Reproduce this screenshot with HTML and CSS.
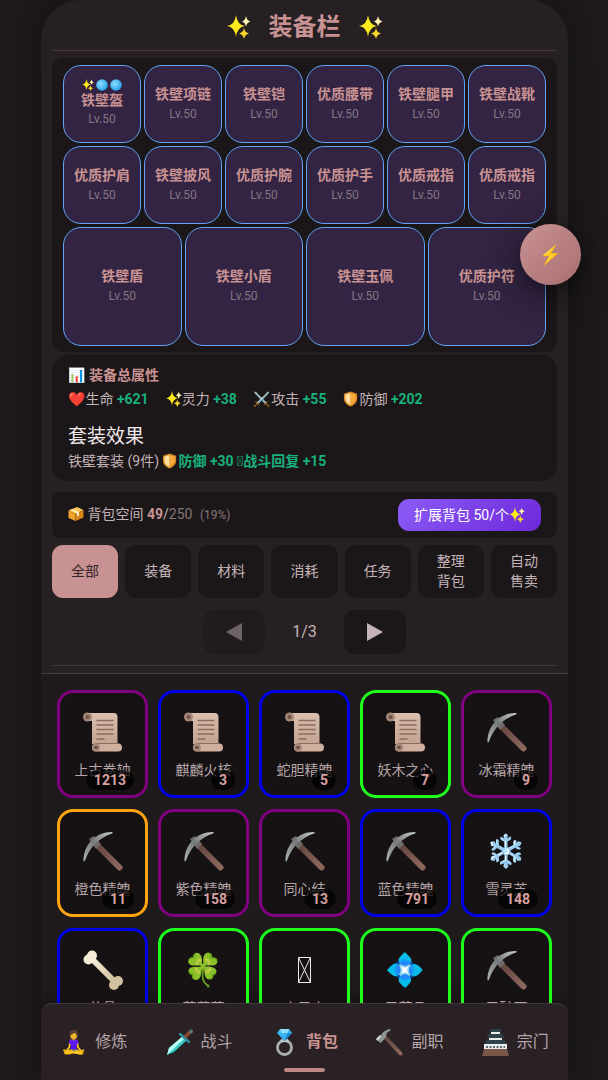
FILE: index.html
```html
<!DOCTYPE html>
<html lang="zh-CN">

<head>
    <meta charset="UTF-8">
    <meta name="viewport" content="width=device-width, initial-scale=1.0">
    <title>装备栏</title>
    <link rel="stylesheet" href="styles.css">
</head>

<body>
    <!-- 图标 -->
    <svg class="defs" aria-hidden="true">
        <defs>
            <linearGradient id="g-paper" x1="0" y1="0" x2="0" y2="1">
                <stop offset="0" stop-color="#d9bfae"/>
                <stop offset="1" stop-color="#c3a391"/>
            </linearGradient>
            <linearGradient id="g-steel" x1="0" y1="1" x2="1" y2="0">
                <stop offset="0" stop-color="#aeb8bb"/>
                <stop offset=".5" stop-color="#76797a"/>
                <stop offset="1" stop-color="#c8cdcd"/>
            </linearGradient>
            <linearGradient id="g-wood" x1="0" y1="0" x2="1" y2="1">
                <stop offset="0" stop-color="#5f433c"/>
                <stop offset="1" stop-color="#8d675c"/>
            </linearGradient>
            <radialGradient id="g-gem" cx=".4" cy=".4" r=".6">
                <stop offset="0" stop-color="#8fdcff"/>
                <stop offset="1" stop-color="#29a4ea"/>
            </radialGradient>
            <linearGradient id="g-bone" x1="0" y1="0" x2="1" y2="1">
                <stop offset="0" stop-color="#f8f1dd"/>
                <stop offset="1" stop-color="#cdbd9d"/>
            </linearGradient>
        </defs>
        <symbol id="spark" viewBox="0 0 24 24">
            <path fill="#fde91c" d="M9 0q1.200 10 9 11-7.800 1-9 11-1.200-10-9-11Q7.800 10 9 0z"/>
            <path fill="#fff3b0" d="M19 1q.8 4.500 4.500 5.500-3.700 1-4.500 5-.8-4-4-5Q18.200 5.500 19 1z"/>
            <path fill="#f6d52a" d="M17 13q.8 4.500 5 5.500-4.200 1-5 5.500-.8-4.500-5-5.500 4.200-1 5-5.500z"/>
        </symbol>
        <symbol id="gem" viewBox="0 0 12 12">
            <circle cx="6" cy="6" r="5.800" fill="url(#g-gem)"/>
        </symbol>
        <symbol id="shield" viewBox="0 0 17 17">
            <path fill="#d98a20" d="M8 .5 15 3v5c0 4-3 7-7 8.500C4 15 1 12 1 8V3z"/>
            <path fill="#ffe0a0" d="M8 2v13c-3-1.400-5.500-4-5.500-7V4z"/>
            <path fill="#f7a93b" d="M8 2l5.500 2v4c0 3-2.500 5.600-5.500 7z"/>
        </symbol>
        <symbol id="pack" viewBox="0 0 16 16">
            <path fill="#ffc65a" d="M.5 4.500 9 1l6.500 3-8 4z"/>
            <path fill="#f0a02c" d="M.5 4.500l7 3.500v7l-7-3z"/>
            <path fill="#d98418" d="M15.500 4v7.500l-8 3.500V8z"/>
            <path fill="#fff0c8" d="M4 3l7 3.200v3.300l-2 .9V7.200L2.500 3.800z"/>
        </symbol>
        <symbol id="scroll" viewBox="0 0 40 40">
            <path fill="url(#g-paper)" d="M4 1h27c2 0 3.500 1.500 3.500 4v27H9V9H4z"/>
            <circle cx="4.500" cy="5" r="4.500" fill="#a68878"/>
            <circle cx="4.500" cy="5" r="2" fill="#6d5046"/>
            <path stroke="#8b6c5f" stroke-width="1.500" d="M13.500 8.500h17M13.500 13h17M13.500 17.500h17M13.500 22h17M13.500 27h8"/>
            <rect x="9" y="31.500" width="30" height="8" rx="4" fill="#cfb09e"/>
            <path stroke="#8b6c5f" stroke-width="1" d="M12 31.500h24"/>
            <circle cx="13" cy="35.500" r="4" fill="#a68878"/>
            <circle cx="13" cy="35.500" r="1.800" fill="#6d5046"/>
        </symbol>
        <symbol id="pick" viewBox="0 0 40 40">
            <path stroke="url(#g-wood)" stroke-width="6" stroke-linecap="round" d="M12 12l24.500 24.500"/>
            <path fill="#6f6b6c" d="M6 8l5-3 7 8-5 5z"/>
            <path fill="url(#g-steel)" d="M.5 30C.5 14 12 1 29 1c.8.200.8 1.200 0 1.600C16 7 7 16 2 29.500c-.3.900-1.300 1.200-1.500.5z"/>
        </symbol>
        <symbol id="bone" viewBox="0 0 40 40">
            <path stroke="url(#g-bone)" stroke-width="6" d="M8 8l24 24"/>
            <g fill="#f5ecd6">
                <circle cx="9" cy="5.500" r="5"/>
                <circle cx="5.500" cy="9.500" r="5"/>
            </g>
            <g fill="#d2c2a2">
                <circle cx="35" cy="31" r="5"/>
                <circle cx="31" cy="35" r="5"/>
            </g>
        </symbol>
        <symbol id="dagger" viewBox="0 0 27 27">
            <path fill="#35c9c4" d="M1 26l2-7L17 7l4 4L8 23z"/>
            <path fill="#b9fff4" d="M1 26l2-7L17 7l2 2z"/>
            <path stroke="#2f8fa0" stroke-width="2.500" stroke-linecap="round" d="M14 5l9 8"/>
            <path stroke="#8a4b2b" stroke-width="3.500" d="M19 8l5-5"/>
            <circle cx="25" cy="2.500" r="2" fill="#58727c"/>
        </symbol>
        <symbol id="ring" viewBox="0 0 27 27">
            <circle cx="13.500" cy="18.500" r="7" fill="none" stroke="#a9aeb1" stroke-width="2.800"/>
            <path fill="#3bb4f2" d="M9 0h9l3 4-7.500 8L6 4z"/>
            <path fill="#8fe0ff" d="M9 0h9l-1.500 4h-6z"/>
            <path fill="#1688cf" d="M16.500 4H21l-7.500 8z"/>
            <path fill="#c2c7ca" d="M10 9.500l3.500 3 3.500-3 .5 3.500h-8z"/>
        </symbol>
        <symbol id="hammer" viewBox="0 0 27 27">
            <path stroke="url(#g-wood)" stroke-width="4" stroke-linecap="round" d="M9 8l15.500 16.500"/>
            <path fill="#8f9596" d="M0 10l4-4 1 1c1-4 5-6.500 9.500-7L14 2c-3 .8-4 2-3.500 5L8 10.500 4.500 14z"/>
            <path fill="#c9cfcf" d="M0 10l4-4 1.500 1.500L1.500 12z"/>
        </symbol>
        <symbol id="castle" viewBox="0 0 27 27">
            <path fill="#7b5749" d="M2 20h23l2 7H0z"/>
            <path fill="#e8ecec" d="M9 2h9v5H9zM7 8h13v6H7zM2 15h23v5H2z"/>
            <path fill="#2e4248" d="M9 0h9l1.500 3h-12zM7 5h13l2.500 4h-18zM5 11h17l3 4H2z"/>
            <path stroke="#2e4248" stroke-width="1.500" stroke-dasharray="2 1.500" d="M4 18h19"/>
        </symbol>
    </svg>

    <div class="app">
        <header class="top">
            <h1 class="title"><svg class="star"><use href="#spark"/></svg>装备栏<svg class="star"><use href="#spark"/></svg></h1>

            <!-- 装备 -->
            <div class="equip">
                <div class="row six">
                    <button class="slot"><span class="gems"><svg><use href="#spark"/></svg><svg><use href="#gem"/></svg><svg><use href="#gem"/></svg></span><b>铁壁盔</b><small>Lv.50</small></button>
                    <button class="slot"><b>铁壁项链</b><small>Lv.50</small></button>
                    <button class="slot"><b>铁壁铠</b><small>Lv.50</small></button>
                    <button class="slot"><b>优质腰带</b><small>Lv.50</small></button>
                    <button class="slot"><b>铁壁腿甲</b><small>Lv.50</small></button>
                    <button class="slot"><b>铁壁战靴</b><small>Lv.50</small></button>
                    <button class="slot"><b>优质护肩</b><small>Lv.50</small></button>
                    <button class="slot"><b>铁壁披风</b><small>Lv.50</small></button>
                    <button class="slot"><b>优质护腕</b><small>Lv.50</small></button>
                    <button class="slot"><b>优质护手</b><small>Lv.50</small></button>
                    <button class="slot"><b>优质戒指</b><small>Lv.50</small></button>
                    <button class="slot"><b>优质戒指</b><small>Lv.50</small></button>
                </div>
                <div class="row four">
                    <button class="slot"><b>铁壁盾</b><small>Lv.50</small></button>
                    <button class="slot"><b>铁壁小盾</b><small>Lv.50</small></button>
                    <button class="slot"><b>铁壁玉佩</b><small>Lv.50</small></button>
                    <button class="slot"><b>优质护符</b><small>Lv.50</small></button>
                </div>
            </div>

            <!-- 属性 -->
            <div class="stats">
                <h2 class="stats-title">📊 装备总属性</h2>
                <div class="stats-list">
                    <span>❤️生命 <b>+621</b></span>
                    <span><svg class="mini"><use href="#spark"/></svg>灵力 <b>+38</b></span>
                    <span>⚔️攻击 <b>+55</b></span>
                    <span><svg class="mini"><use href="#shield"/></svg>防御 <b>+202</b></span>
                </div>
                <h3 class="suit-title">套装效果</h3>
                <p class="suit">铁壁套装 (9件) <b><svg class="mini"><use href="#shield"/></svg>防御 +30</b> <b><svg class="box-mini" viewBox="0 0 6 10"><path d="M.5.5h5v9h-5zM.5.5l5 9M5.5.5l-5 9"/></svg>战斗回复 +15</b></p>
            </div>

            <!-- 背包空间 -->
            <div class="space">
                <span><svg class="mini"><use href="#pack"/></svg> 背包空间 <b>49</b>/<i>250</i> <small>(19%)</small></span>
                <button class="expand">扩展背包 50/个<svg class="mini"><use href="#spark"/></svg></button>
            </div>

            <div class="tabs">
                <button class="tab active">全部</button>
                <button class="tab">装备</button>
                <button class="tab">材料</button>
                <button class="tab">消耗</button>
                <button class="tab">任务</button>
                <button class="tab">整理<br>背包</button>
                <button class="tab">自动<br>售卖</button>
            </div>

            <div class="pager">
                <button class="page-btn" aria-label="上一页" disabled><svg viewBox="0 0 16 18"><path d="M16 0v18L0 9z"/></svg></button>
                <span>1/3</span>
                <button class="page-btn" aria-label="下一页"><svg viewBox="0 0 16 18"><path d="M0 0v18l16-9z"/></svg></button>
            </div>
        </header>

        <!-- 物品 -->
        <main class="bag">
            <button class="item purple"><span class="pic"><svg><use href="#scroll"/></svg></span><span>上古卷轴</span><em>1213</em></button>
            <button class="item blue"><span class="pic"><svg><use href="#scroll"/></svg></span><span>麒麟火核</span><em>3</em></button>
            <button class="item blue"><span class="pic"><svg><use href="#scroll"/></svg></span><span>蛇胆精魄</span><em>5</em></button>
            <button class="item green"><span class="pic"><svg><use href="#scroll"/></svg></span><span>妖木之心</span><em>7</em></button>
            <button class="item purple"><span class="pic"><svg><use href="#pick"/></svg></span><span>冰霜精魄</span><em>9</em></button>
            <button class="item orange"><span class="pic"><svg><use href="#pick"/></svg></span><span>橙色精魄</span><em>11</em></button>
            <button class="item purple"><span class="pic"><svg><use href="#pick"/></svg></span><span>紫色精魄</span><em>158</em></button>
            <button class="item purple"><span class="pic"><svg><use href="#pick"/></svg></span><span>同心结</span><em>13</em></button>
            <button class="item blue"><span class="pic"><svg><use href="#pick"/></svg></span><span>蓝色精魄</span><em>791</em></button>
            <button class="item blue"><span class="pic">❄️</span><span>雪灵芝</span><em>148</em></button>
            <button class="item blue"><span class="pic"><svg><use href="#bone"/></svg></span><span>兽骨</span></button>
            <button class="item green"><span class="pic">🍀</span><span>草药草</span></button>
            <button class="item green"><span class="pic"><svg class="box-big" viewBox="0 0 13 26"><path d="M.5.5h12v25H.5zM.5.5l12 25M12.5.5l-12 25"/></svg></span><span>木灵木</span></button>
            <button class="item green"><span class="pic">💠</span><span>灵蓝晶</span></button>
            <button class="item green"><span class="pic"><svg><use href="#pick"/></svg></span><span>灵矿石</span></button>
        </main>

        <nav class="nav">
            <a href="#"><span class="ico">🧘‍♀️</span>修炼</a>
            <a href="#"><svg class="ico"><use href="#dagger"/></svg>战斗</a>
            <a href="#" class="on"><svg class="ico"><use href="#ring"/></svg>背包</a>
            <a href="#"><svg class="ico"><use href="#hammer"/></svg>副职</a>
            <a href="#"><svg class="ico"><use href="#castle"/></svg>宗门</a>
        </nav>
    </div>
    <button class="float" aria-label="快捷">⚡</button>
</body>

</html>
```
FILE: styles.css
```css
* {
    box-sizing: border-box;
    margin: 0;
    padding: 0;
}

body {
    padding: 0 40px 0 41px;
    background: #1e1a1b;
    color: #c3b3b7;
    font-family: Roboto, "Noto Sans CJK SC", "Noto Color Emoji", sans-serif;
    font-size: 14px;
    line-height: 20px;
    overflow: hidden;
}

button {
    border: 0;
    background: none;
    color: inherit;
    font: inherit;
    cursor: pointer;
}

svg {
    fill: currentColor;
}

.defs {
    position: absolute;
    width: 0;
    height: 0;
}

.mini {
    width: 16px;
    height: 16px;
    vertical-align: -3px;
}

.app {
    display: flex;
    flex-direction: column;
    height: 100vh;
    border-radius: 40px 40px 0 0;
    background: #1f1b1c;
    box-shadow: 0 0 40px rgba(0, 0, 0, .4);
    overflow: hidden;
}

.top {
    padding: 0 11px 7px;
    background: #272022;
    border-bottom: 1px solid #493a3c;
}

.title {
    display: flex;
    justify-content: center;
    gap: 18px;
    height: 51px;
    padding-top: 11px;
    border-bottom: 1px solid #4b3638;
    color: #c99292;
    font-size: 24px;
    line-height: 32px;
}

.star {
    width: 24px;
    height: 26px;
    margin-top: 3px;
}

/* 装备栏 */
.equip {
    margin-top: 7px;
    padding: 7px 11px 6px;
    border-radius: 11px;
    background: #1b1617;
}

.row {
    display: grid;
    gap: 3px;
}

.six {
    grid-template-columns: repeat(6, 1fr);
    margin-bottom: 3px;
}

.four {
    grid-template-columns: repeat(4, 1fr);
}

.slot {
    display: flex;
    flex-direction: column;
    align-items: center;
    justify-content: center;
    aspect-ratio: 1;
    border: 1px solid #60a5fa;
    border-radius: 18px;
    background: #322442;
    color: #c99292;
    white-space: nowrap;
}

.slot small {
    color: #857684;
    font-size: 12px;
}

.gems {
    display: flex;
    gap: 2px;
}

.gems svg {
    width: 12px;
    height: 12px;
}

.gems + b {
    line-height: 18px;
}

/* 总属性 */
.stats {
    margin-top: 3px;
    padding: 10px 16px;
    border-radius: 16px;
    background: #1b1617;
}

.stats b {
    color: #18b07b;
}

.stats-title {
    color: #c99292;
    font-size: 14px;
}

.stats-list {
    display: flex;
    gap: 17px;
    margin: 4px 0 14px;
}

.suit-title {
    color: #f0e8ea;
    font-size: 19px;
    font-weight: 400;
    line-height: 28px;
}

.box-mini {
    width: 6px;
    height: 10px;
    fill: none;
    stroke: #18b07b;
    stroke-width: .5;
}

.space {
    display: flex;
    align-items: center;
    justify-content: space-between;
    margin: 11px 0 7px;
    padding: 7px 16px;
    border-radius: 8px;
    background: #1b1617;
}

.space b {
    color: #c99292;
}

.space i,
.space small {
    color: #857679;
    font-style: normal;
}

.space small {
    margin-left: 4px;
    font-size: 12px;
}

.expand {
    padding: 6px 16px;
    border-radius: 11px;
    background: linear-gradient(135deg, #8b5cf6, #6d28d9);
    color: #fff;
}

.tabs {
    display: grid;
    grid-template-columns: repeat(7, 1fr);
    gap: 7px;
}

.tab {
    height: 53px;
    border-radius: 11px;
    background: #1b1617;
}

.tab.active {
    background: #c99292;
    color: #32262a;
}

.pager {
    display: flex;
    align-items: center;
    justify-content: center;
    gap: 27px;
    padding: 12px 0 11px;
    border-bottom: 1px solid #43373a;
    font-size: 16px;
}

.page-btn {
    width: 62px;
    height: 44px;
    border-radius: 11px;
    background: #1b1617;
}

.page-btn svg {
    display: block;
    width: 16px;
    height: 18px;
    margin: 0 auto;
}

.page-btn:disabled {
    opacity: .45;
}

/* 背包物品 */
.bag {
    display: grid;
    flex: 1;
    grid-template-columns: repeat(5, 1fr);
    grid-auto-rows: 108px;
    gap: 11px 10px;
    min-height: 0;
    padding: 16px;
    overflow: hidden;
}

.item {
    display: flex;
    flex-direction: column;
    align-items: center;
    position: relative;
    padding-top: 13px;
    border: 3px solid;
    border-radius: 16px;
    background: #161112;
}

.item span {
    color: #b5a5a9;
}

.item .pic {
    display: flex;
    align-items: center;
    height: 52px;
    margin-bottom: 2px;
    font-size: 32px;
    line-height: 52px;
}

.pic svg {
    width: 40px;
    height: 40px;
}

.item em {
    position: absolute;
    right: 11px;
    bottom: 5px;
    padding: 0 8px;
    border-radius: 11px;
    background: rgba(0, 0, 0, .7);
    color: #d9a0a0;
    font-style: normal;
    font-weight: 700;
}

.purple {
    border-color: #800080;
}

.blue {
    border-color: #0000e8;
}

.green {
    border-color: #1eff1e;
}

.orange {
    border-color: #ffa510;
}

.pic .box-big {
    width: 13px;
    height: 26px;
    fill: none;
    stroke: #f0e8ea;
}

/* 底部导航 */
.nav {
    display: grid;
    grid-template-columns: repeat(5, 1fr);
    height: 77px;
    border-top: 1px solid #42383b;
    border-radius: 11px 11px 0 0;
    background: #2a2124;
    box-shadow: 0 -4px 20px rgba(0, 0, 0, .4);
}

.nav a {
    display: flex;
    align-items: center;
    justify-content: center;
    gap: 8px;
    position: relative;
    color: #b5a5a9;
    font-size: 16px;
    text-decoration: none;
}

.nav .ico {
    width: 27px;
    height: 27px;
    font-size: 22px;
    line-height: 27px;
}

.nav .on {
    color: #c99292;
    font-weight: 700;
}

.nav .on::after {
    content: "";
    position: absolute;
    bottom: 8px;
    left: 32px;
    right: 32px;
    height: 4px;
    border-radius: 2px;
    background: #bd8787;
}

.float {
    position: fixed;
    top: 224px;
    right: 27px;
    width: 61px;
    height: 61px;
    border-radius: 50%;
    background: linear-gradient(135deg, #c99292, #a87070);
    box-shadow: 0 8px 30px rgba(0, 0, 0, .6);
    font-size: 18px;
}
```
